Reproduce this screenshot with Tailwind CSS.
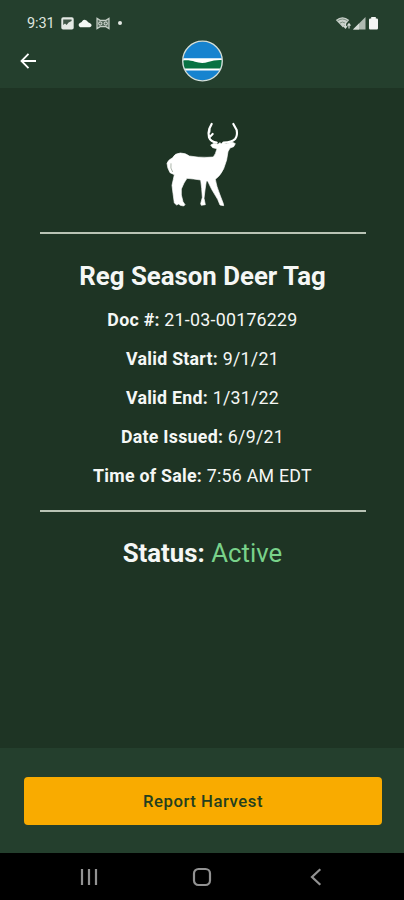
<!DOCTYPE html>
<html lang="en">
<head>
<meta charset="utf-8">
<meta name="viewport" content="width=device-width, initial-scale=1">
<title>Reg Season Deer Tag</title>
<script src="https://cdn.jsdelivr.net/npm/@tailwindcss/browser@4"></script>
</head>
<body class="flex h-[900px] w-[404px] flex-col overflow-hidden bg-[#1e3424] font-['Roboto',sans-serif] text-[#f5f7f5]">
<header class="h-[88px] shrink-0 bg-[#243f2d]">
  <div class="flex h-[36px] items-end justify-between pl-[27px] pr-[25px] pb-[5px]">
    <div class="flex items-center">
      <span class="relative top-px w-[34px] text-[14.5px] leading-4 tracking-[-0.1px] text-[#dfe5df]">9:31</span>
      <svg class="h-[13px] w-[13px]" viewBox="0 0 13 13"><rect x=".3" y=".3" width="12.4" height="12.2" rx="1.8" fill="#e4e9e4"/><path d="M2.2 2.5h8.4v1.4L7.6 5.4 5.6 8 4 6.5 2.2 8z" fill="#405647"/></svg>
      <svg class="ml-[4px] h-[13px] w-[14px]" viewBox="0 0 14 13"><path d="M2.2 10.2a2.3 2.3 0 0 1-.2-4.3C3 5.5 3.8 5 4.3 4a3.3 3.3 0 0 1 5.6 1c.5 1 3 .9 3.6 2.8.3 1.3-.6 2.4-1.9 2.4z" fill="#f4f7f4"/></svg>
      <svg class="ml-[4px] h-[13px] w-[14px]" viewBox="0 0 14 13"><path d="M1 1.3l3.1 2h5.8l3.1-2v10.4l-3.1-2H4.1L1 11.7z" fill="#5c7062" stroke="#c5cfc7" stroke-width="1.2"/><circle cx="4.2" cy="6.5" r="1.6" fill="none" stroke="#dce3dd"/><circle cx="9.8" cy="6.5" r="1.6" fill="none" stroke="#dce3dd"/></svg>
      <span class="ml-[8px] size-[4px] rounded-full bg-[#e4e9e4]"></span>
    </div>
    <svg class="h-[15px] w-[44px]" viewBox="0 0 44 15"><path d="M.8 4Q7.5-1.6 14.2 4L8 11.5z" fill="#c9d0ca"/><path d="M2.5 4.9Q7.5 1.2 12.5 4.9M4.8 7.1Q7.5 5 10.2 7.1" fill="none" stroke="#6a7d6f" stroke-width=".8"/><path d="M10.5 7v4.5M8.8 10l1.7 2 1.6-2M14 12.5V8M12.5 9.6L14 7.8l1.5 1.8" fill="none" stroke="#d4dbd5" stroke-width="1.2"/><path d="M18 13.5L30.5 1v12.5z" fill="#afb9b1"/><path d="M18 13.5l6-6v6z" fill="#d5dbd6"/><path d="M34 3.7q0-1.2 1.2-1.2h1V1h4.6v1.5h1q1.2 0 1.2 1.2v8.6q0 1.2-1.2 1.2h-6.6q-1.2 0-1.2-1.2z" fill="#f4f6f4"/></svg>
  </div>
  <div class="grid h-[50px] grid-cols-3 items-center px-[20px]">
    <svg class="h-[16px] w-[17px]" viewBox="0 0 17 16" fill="none" stroke="#fff" stroke-width="1.8"><path d="M8.5.9L1.5 8l7 7.1M1.8 8H16"/></svg>
    <svg class="size-[42px] justify-self-center" viewBox="0 0 42 42"><defs><clipPath id="seal"><circle cx="21.5" cy="21" r="19.5"/></clipPath></defs><g clip-path="url(#seal)"><path fill="#1683cf" d="M0 0h42v42H0z"/><path fill="#fff" d="M0 18.3h42v12.2H0z"/><path fill="#087243" d="M0 20.8c5-.9 10-.4 14 1 4 1.4 9 1.6 13 .3 5-1.8 9-2.4 15-2.1v8.5H0z"/></g><circle cx="21.5" cy="21" r="19.8" fill="none" stroke="#d3e0dc" stroke-width="1.3"/></svg>
  </div>
</header>
<main class="flex h-[660px] shrink-0 flex-col items-center pl-[40px] pr-[39px] pt-[22px]">
  <svg class="mr-[2px] h-[110px] w-[100px]" viewBox="0 0 300 330"><path fill="#fff" stroke="#fff" stroke-width="2" stroke-linejoin="round" d="M45 160Q48 150 62 143Q68 130 85 129Q101 129 112 138Q140 143 165 142L184 141Q191 132 195 116L182 113L176 105L186 100L198 103L203 98L208 101L213 97L222 102L240 96L250 101L245 110L234 114L228 125Q226 150 215 176Q206 196 190 208Q193 228 204 255L214 281L215 287L204 285L197 268L179 238L167 213L163 213L159 240L156 265L160 284L148 286L146 281L151 262L149 235L146 210L125 207L105 205L96 219L88 237L88 255L93 275L99 284L95 288L85 286L80 282L74 285L67 279L63 250L60 226L64 208L67 194L54 188Q46 175 45 160Z"/><path d="M194 98Q176 95 171 82Q168 68 172 56L179 42M172 66L173 54M174 80L182 72M215 98Q240 97 250 86Q257 76 254 60L244 42" fill="none" stroke="#fff" stroke-width="6.5" stroke-linecap="round" stroke-linejoin="round"/><path d="M57 160Q54 175 62 186" fill="none" stroke="#81907f" stroke-width="2"/></svg>
  <div class="mt-[12px] h-[2px] w-[326px] bg-[#b9c3b5]"></div>
  <h1 class="mt-[26px] text-[25.8px] font-bold leading-8 whitespace-nowrap">Reg Season Deer Tag</h1>
  <div class="mt-[8px] flex flex-col text-center text-[17.8px] leading-[39px] tracking-[0.25px] whitespace-nowrap">
    <p><b>Doc #:</b> 21-03-00176229</p>
    <p><b>Valid Start:</b> 9/1/21</p>
    <p><b>Valid End:</b> 1/31/22</p>
    <p><b>Date Issued:</b> 6/9/21</p>
    <p><b>Time of Sale:</b> 7:56 AM EDT</p>
  </div>
  <div class="mt-[15px] h-[2px] w-[326px] bg-[#b9c3b5]"></div>
  <p class="mt-[25px] text-[25.8px] leading-8 whitespace-nowrap"><b>Status:</b> <span class="text-[#79d28a]">Active</span></p>
</main>
<footer class="h-[105px] shrink-0 bg-[#243f2d] px-[24px] pt-[29px]">
  <button class="h-[48px] w-[358px] rounded-[4px] bg-[#f9ab00] pt-px text-[16.7px] font-medium tracking-[0.55px] text-[#243f1f]">Report Harvest</button>
</footer>
<nav class="flex h-[47px] shrink-0 items-center justify-between bg-black px-[80px]">
  <svg class="size-[18px]" viewBox="0 0 18 18" fill="none" stroke="#929292" stroke-width="2.2"><path d="M2 1v16M9 1v16M16 1v16"/></svg>
  <svg class="size-[20px]" viewBox="0 0 20 20" fill="none" stroke="#929292" stroke-width="2.2"><rect x="2" y="2" width="16" height="16" rx="4.5"/></svg>
  <svg class="size-[18px]" viewBox="0 0 18 18" fill="none" stroke="#929292" stroke-width="2.2"><path d="M14.3 1.2L6 9l8.3 7.8"/></svg>
</nav>
</body>
</html>
